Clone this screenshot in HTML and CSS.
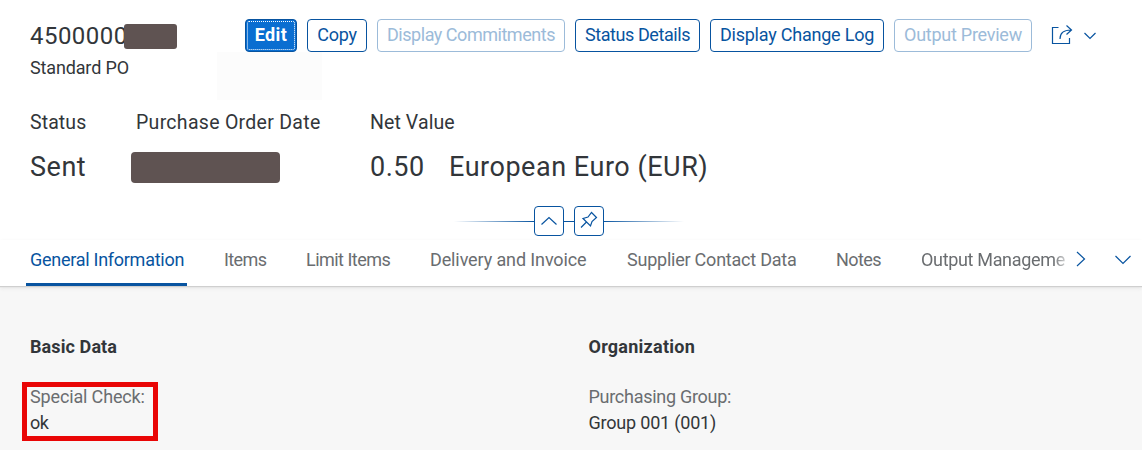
FILE: index.html
```html
<!DOCTYPE html>
<html lang="en">
<head>
<meta charset="utf-8">
<title>Purchase Order</title>
<link rel="stylesheet" href="styles.css">
</head>
<body>
<header class="header">
  <div class="title-row">
    <div class="heading">
      <h1 class="title"><span>4500000</span><i class="mask mask-title"></i></h1>
      <p class="subtitle"><span>Standard PO</span></p>
    </div>
    <div class="actions">
      <button class="btn btn-edit"><span>Edit</span></button>
      <button class="btn btn-copy"><span>Copy</span></button>
      <button class="btn btn-commitments" disabled><span>Display Commitments</span></button>
      <button class="btn btn-status"><span>Status Details</span></button>
      <button class="btn btn-log"><span>Display Change Log</span></button>
      <button class="btn btn-preview" disabled><span>Output Preview</span></button>
      <svg class="share" width="24" height="24" viewBox="0 0 24 24"><path d="M8.500 3.500H2.500V19.500H19.500V14"/><path d="M10 15C10 9.500 13 6 21 6M16.500 1.500L21.500 6L16.500 10.500"/></svg>
      <svg class="share-menu" width="14" height="10" viewBox="0 0 14 10"><path d="M1.500 2L7 7.500L12.500 2"/></svg>
    </div>
    <i class="smudge"></i>
  </div>
  <div class="facets">
    <div class="facet facet-status"><span class="label">Status</span><span class="value">Sent</span></div>
    <div class="facet facet-date"><span class="label label-date">Purchase Order Date</span><i class="mask mask-date"></i></div>
    <div class="facet"><span class="label">Net Value</span><div class="amount"><span class="value value-num">0.50</span><span class="value value-cur">European Euro (EUR)</span></div></div>
  </div>
  <div class="toggle-bar">
    <i class="rule rule-left"></i>
    <button class="toggle"><svg width="28" height="28" viewBox="0 0 28 28"><path d="M6.500 17.500L14 10.500L21.500 17.500"/></svg></button>
    <i class="rule rule-mid"></i>
    <button class="toggle"><svg width="28" height="28" viewBox="0 0 28 28"><path d="M6 20.500L11.500 15M8 11.500L15.500 19L17 14.500L21.500 10.500L16.500 5.500L13 10Z"/></svg></button>
    <i class="rule rule-right"></i>
  </div>
</header>
<nav class="tabs">
  <a class="tab tab-general"><span>General Information</span></a>
  <a class="tab tab-items"><span>Items</span></a>
  <a class="tab tab-limit"><span>Limit Items</span></a>
  <a class="tab tab-delivery"><span>Delivery and Invoice</span></a>
  <a class="tab tab-supplier"><span>Supplier Contact Data</span></a>
  <a class="tab tab-notes"><span>Notes</span></a>
  <a class="tab tab-output"><span>Output Manageme</span></a>
  <svg class="next" width="12" height="18" viewBox="0 0 12 18"><path d="M2 2L9.500 9L2 16"/></svg>
  <svg class="more" width="18" height="12" viewBox="0 0 18 12"><path d="M1.500 2L9 9.500L16.500 2"/></svg>
</nav>
<main class="content">
  <section class="group">
    <h2 class="h-basic"><span>Basic Data</span></h2>
    <div class="field field-marked"><span class="name name-check">Special Check:</span><span class="data">ok</span></div>
  </section>
  <section class="group">
    <h2 class="h-org"><span>Organization</span></h2>
    <div class="field"><span class="name name-group">Purchasing Group:</span><span class="data data-group">Group 001 (001)</span></div>
  </section>
</main>
</body>
</html>
```
FILE: styles.css
```css
* { box-sizing: border-box; }
body {
  margin: 0;
  width: 1142px;
  height: 450px;
  overflow: hidden;
  background: #fff;
  color: #32363a;
  font: 18px/24px Roboto, "Liberation Sans", sans-serif;
  white-space: nowrap;
}
h1, h2, p { margin: 0; font-weight: 400; }
svg { display: block; fill: none; stroke: #0854a0; stroke-width: 1.2; flex: none; }
i { display: block; flex: none; }

.header { height: 240px; }
.title-row { position: relative; display: flex; height: 110px; padding: 19px 0 0 30px; }
.heading { width: 215px; }
.title { display: flex; height: 34px; font-size: 24px; line-height: 35px; letter-spacing: 0.45px; }
.title span { width: 94px; }
.mask { background: #5f5352; border-radius: 3px; }
.mask-title { position: relative; z-index: 1; width: 53px; height: 25px; margin-top: 5px; }
.subtitle { height: 28px; line-height: 30px; letter-spacing: -0.15px; }
.smudge { position: absolute; left: 217px; top: 52px; width: 105px; height: 48px; background: #fcfcfc; }

.actions { display: flex; gap: 10px; height: 33px; }
.btn {
  height: 33px;
  padding: 0 0 2px;
  border: 1px solid #0854a0;
  border-radius: 4px;
  background: #fff;
  color: #0854a0;
  font: inherit;
  line-height: 29px;
}
.btn:disabled { border-color: #9cbbd9; color: #9cbbd9; }
.btn-edit { width: 52px; background: #0a6ed1; border-color: #0854a0; color: #fff; font-weight: 700; letter-spacing: 0.4px; outline: 1px dotted #fff; outline-offset: -3px; }
.btn-copy { width: 60px; letter-spacing: -0.2px; }
.btn-commitments { width: 188px; letter-spacing: -0.47px; }
.btn-status { width: 125px; letter-spacing: -0.42px; }
.btn-log { width: 174px; letter-spacing: -0.22px; }
.btn-preview { width: 138px; letter-spacing: -0.26px; }
.share { margin: 5px 0 0 8px; }
.share-menu { margin: 12px 0 0 -1px; }

.facets { display: flex; height: 95px; padding-left: 30px; }
.facet { display: flex; flex-direction: column; }
.facet-status { width: 106px; }
.facet-date { width: 234px; }
.label { height: 40px; font-size: 19.5px; line-height: 26px; letter-spacing: 0.1px; }
.label-date { letter-spacing: 0.29px; }
.value { font-size: 27px; line-height: 34px; letter-spacing: 0.53px; }
.amount { display: flex; }
.value-num { width: 79px; }
.mask-date { width: 149px; height: 31px; margin: 2px 0 0 -5px; border-radius: 4px; }

.toggle-bar { display: flex; align-items: center; height: 32px; padding-left: 454px; }
.toggle { width: 30px; height: 30px; padding: 0; border: 1px solid #0854a0; border-radius: 4px; background: #fff; }
.rule { height: 1px; background: #0854a0; }
.rule-left { width: 80px; background: linear-gradient(to left, #0854a0, transparent); }
.rule-mid { width: 10px; }
.rule-right { width: 80px; background: linear-gradient(to right, #0854a0, transparent); }

.tabs { position: relative; z-index: 1; display: flex; height: 46px; padding-left: 26px; background: #fff; box-shadow: 0 1px 1px #cfcfcf, 0 2px 4px #e4e4e4; }
.tab { height: 46px; padding-left: 4px; line-height: 39px; color: #6a6d70; }
.tab-general { width: 161px; margin-right: 33px; color: #0854a0; letter-spacing: -0.27px; border-bottom: 3px solid #0854a0; border-radius: 2px 2px 0 0; }
.tab-items { width: 82px; letter-spacing: -0.6px; }
.tab-limit { width: 124px; letter-spacing: -0.53px; }
.tab-delivery { width: 197px; letter-spacing: -0.12px; }
.tab-supplier { width: 209px; letter-spacing: -0.23px; }
.tab-notes { width: 85px; letter-spacing: -0.6px; }
.tab-output { width: 150px; letter-spacing: -0.33px; mask-image: linear-gradient(to right, #000 136px, transparent 154px); }
.next { margin: 10px 0 0 8px; }
.more { margin: 14px 0 0 27px; }

.content { display: grid; grid-template-columns: 558.5px 1fr; height: 164px; padding: 48px 0 0 30px; background: #f7f7f7; }
.group { display: flex; flex-direction: column; align-items: flex-start; }
.group h2 { height: 48px; font-size: 18px; font-weight: 700; line-height: 26px; letter-spacing: 0.1px; }
.group .h-org { letter-spacing: 0.25px; }
.field { display: flex; flex-direction: column; height: 59px; padding-top: 2px; line-height: 26px; }
.field-marked { width: 136px; margin-left: -8px; padding: 0 0 0 3px; border: 5px solid #e90606; }
.field-marked .name { height: 25px; line-height: 20px; }
.field-marked .data { line-height: 21px; letter-spacing: -0.5px; }
.name { color: #6a6d70; }
.name-check { letter-spacing: -0.15px; }
.name-group { letter-spacing: -0.28px; }
.data-group { letter-spacing: -0.2px; }
```
